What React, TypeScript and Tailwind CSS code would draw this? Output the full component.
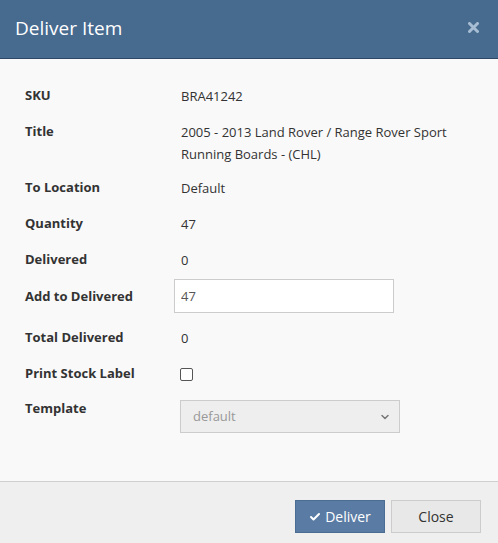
import { Check, ChevronDown } from 'lucide-react';

const Row = ({ label, children, className = '' }: { label: string; children: React.ReactNode; className?: string }) => (
  <div className={`flex items-start ${className}`}>
    <div className="w-[156px] shrink-0 font-bold text-[#333] leading-[21px]">{label}</div>
    <div className="flex-1 text-[#333] leading-[22px]">{children}</div>
  </div>
);

const App = () => {
  return (
    <div
      className="w-[498px] h-[543px] flex flex-col text-[13px] bg-[#f9f9f9]"
      style={{ fontFamily: '"Open Sans", sans-serif' }}
    >
      <div className="h-[59px] shrink-0 bg-[#476a8f] border-b border-[#2e4866] flex items-center justify-between pl-[15px] pr-[19px]">
        <h4 className="text-white text-[19px] leading-none pb-[2px]">Deliver Item</h4>
        <svg width="11" height="11" viewBox="0 0 11 11" className="mb-[3px]">
          <path d="M1.5 1.5 L9.5 9.5 M9.5 1.5 L1.5 9.5" stroke="#a6bdd3" strokeWidth="3" strokeLinecap="round" />
        </svg>
      </div>

      <div className="flex-1 pl-[25px] pr-[30px] pt-[26px]">
        <Row label="SKU">BRA41242</Row>
        <Row label="Title" className="mt-[14px]">
          <div className="w-[280px]">2005 - 2013 Land Rover / Range Rover Sport Running Boards - (CHL)</div>
        </Row>
        <Row label="To Location" className="mt-[12px]">Default</Row>
        <Row label="Quantity" className="mt-[14px]">47</Row>
        <Row label="Delivered" className="mt-[14px]">0</Row>
        <div className="flex items-start mt-[8px]">
          <div className="w-[149px] shrink-0 font-bold text-[#333] leading-[21px] pt-[7px]">Add to Delivered</div>
          <input
            defaultValue="47"
            className="w-[220px] h-[34px] bg-white border border-[#ccc] px-[6px] text-[#555] text-[13px] outline-none"
          />
        </div>
        <Row label="Total Delivered" className="mt-[14px]">0</Row>
        <div className="flex items-start mt-[14px]">
          <div className="w-[155px] shrink-0 font-bold text-[#333] leading-[21px]">Print Stock Label</div>
          <div className="w-[13px] h-[13px] mt-[5px] border border-[#555] rounded-[2px] bg-white"></div>
        </div>
        <div className="flex items-start mt-[14px]">
          <div className="w-[155px] shrink-0 font-bold text-[#333] leading-[21px]">Template</div>
          <div className="w-[220px] h-[33px] mt-[2px] bg-[#eee] border border-[#ccc] flex items-center justify-between pl-[12px] pr-[8px] text-[#999]">
            <span>default</span>
            <ChevronDown size={12} strokeWidth={3} className="text-[#777]" />
          </div>
        </div>
      </div>

      <div className="h-[62px] shrink-0 bg-[#efefef] border-t border-[#cfcfcf] flex items-start justify-end gap-[6px] pt-[18px] pr-[17px]">
        <button className="w-[90px] h-[33px] bg-[#5a7ca4] border border-[#4c6d93] text-white flex items-center justify-center gap-[4px]">
          <Check size={12} strokeWidth={4} />
          <span className="text-[14px]">Deliver</span>
        </button>
        <button className="w-[90px] h-[33px] bg-[#e8e8e8] border border-[#ccc] text-[#333] text-[14px]">Close</button>
      </div>
    </div>
  );
};

export default App;
